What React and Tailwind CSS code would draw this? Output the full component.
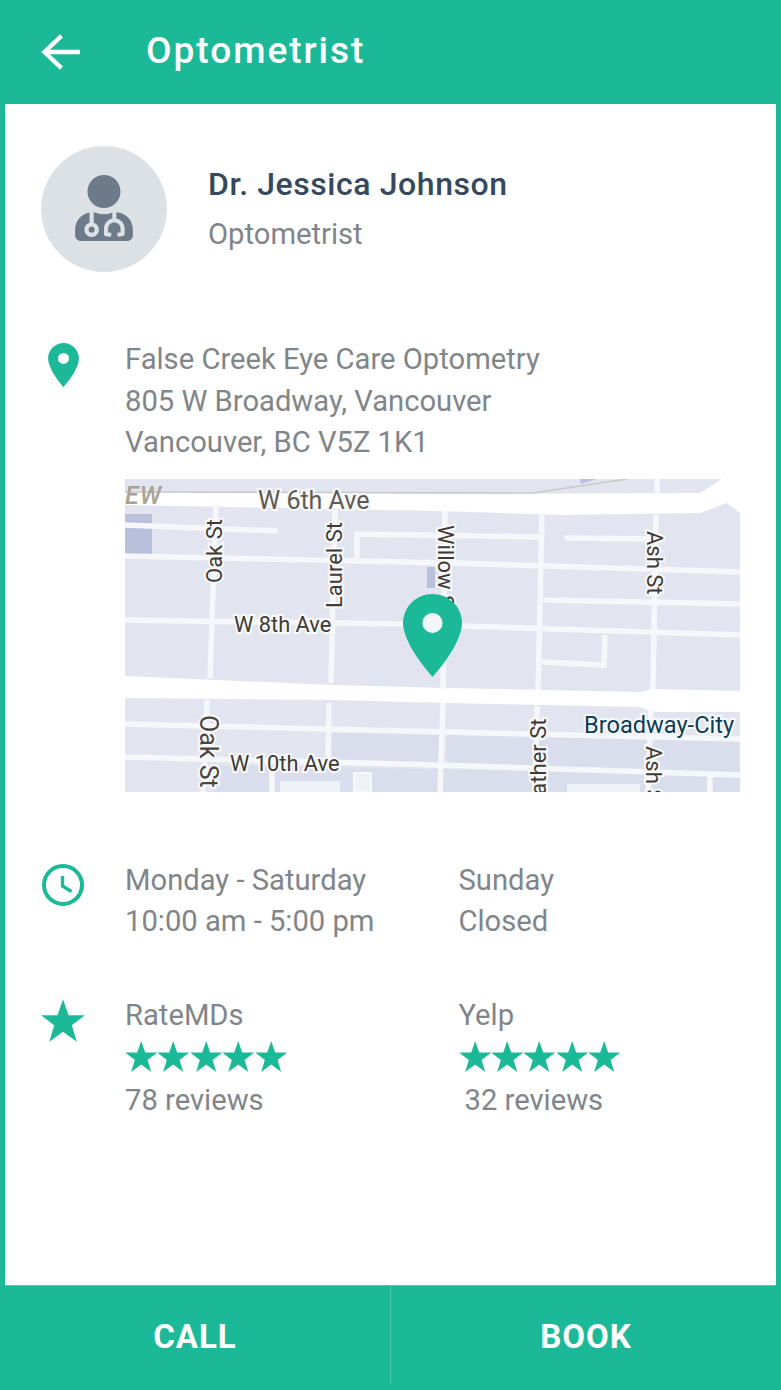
import React from 'react';
import { FaUserMd } from 'react-icons/fa';

const TEAL = '#1cb999';
const PIN = 'M12 2C8.13 2 5 5.13 5 9c0 5.25 7 13 7 13s7-7.75 7-13c0-3.87-3.13-7-7-7zm0 9.5a2.5 2.5 0 1 1 0-5 2.5 2.5 0 0 1 0 5z';

const Star = ({ className }) => (
    <svg viewBox="0 0 32 31" className={className} fill={TEAL}>
        <polygon points="16,0 20,11.6 32,11.6 22.4,19 26,31 16,23.6 6,31 9.6,19 0,11.6 12,11.6" />
    </svg>
);

const Stars = () => (
    <div className="flex h-[31px] mt-[5px]">
        {[0, 1, 2, 3, 4].map((i) => (
            <Star key={i} className="w-[32.4px] h-[31px] shrink-0" />
        ))}
    </div>
);

const roads = [
    '125,525 278,531',
    '125,556 450,563 740,572',
    '125,620 403,624 740,635',
    '125,724 447,732 740,739',
    '125,757 440,765 740,775',
    '543,600 740,604',
    '357,558 357,534 540,537',
    '605,635 604,665 542,662',
    '216,505 210,678',
    '207,700 203,792',
    '335,510 331,683',
    '329,703 328,765',
    '272,770 272,792',
    '445,511 443,690',
    '443,703 440,792',
    '542,513 538,690',
    '537,706 535,792',
    '657,479 657,493',
    '656,515 653,690',
    '651,710 648,792',
    '710,776 710,792',
];

const labels = [
    { text: 'W 6th Ave', x: 258, y: 509, size: 25, fill: '#5f5a52' },
    { text: 'W 8th Ave', x: 234, y: 632, size: 21.8, fill: '#3f3a33' },
    { text: 'W 10th Ave', x: 230, y: 771, size: 21.8, fill: '#3f3a33' },
    { text: 'Oak St', x: 222, y: 583, size: 22, fill: '#3f3a33', rotate: -90 },
    { text: 'Laurel St', x: 342, y: 608, size: 22, fill: '#3f3a33', rotate: -90 },
    { text: 'Oak St', x: 200, y: 715, size: 25, fill: '#4a453e', rotate: 90 },
    { text: 'Willow St', x: 438, y: 525, size: 22, fill: '#3f3a33', rotate: 90 },
    { text: 'Ash St', x: 647, y: 531, size: 22, fill: '#3f3a33', rotate: 90 },
    { text: 'Heather St', x: 546, y: 822, size: 22, fill: '#3f3a33', rotate: -90 },
    { text: 'Ash St', x: 646, y: 746, size: 22, fill: '#3f3a33', rotate: 90 },
    { text: 'Broadway-City', x: 584, y: 733, size: 23.6, fill: '#0b3d55' },
];

const MapPicture = () => (
    <svg viewBox="125 479 615 313" className="block w-[615px] h-[313px]" style={{ fontFamily: 'Roboto, sans-serif' }}>
        <rect x="125" y="479" width="615" height="313" fill="#e2e5ef" />
        <polygon points="447,735 740,741 740,775 447,767" fill="#dadeec" />
        <polygon points="332,733 440,735 440,765 332,760" fill="#dadeec" />
        <polygon points="215,765 740,775 740,792 215,792" fill="#dadeec" />
        <rect x="125" y="514" width="27" height="40" fill="#b8c0dc" />
        <rect x="427" y="567" width="8" height="21" fill="#b8c0dc" />
        <polygon points="580,479 596,479 581,484" fill="#b8c0dc" />
        <polygon points="125,492 440,494 700,493 722,479 740,479 740,513 727,503 700,513 560,515 440,511 125,505" fill="#ffffff" />
        <polygon points="125,676 333,685 447,688 640,692 653,689 740,691 740,712 653,712 640,707 447,703 333,700 125,698" fill="#ffffff" />
        <polyline points="125,492 533,493 627,479" fill="none" stroke="#c9c9c9" strokeWidth="1.5" />
        {roads.map((r) => (
            <polyline key={r} points={r} fill="none" stroke="#f6f7fb" strokeWidth="5.5" />
        ))}
        <line x1="567" y1="538" x2="655" y2="539" stroke="#f6f7fb" strokeWidth="5.5" strokeLinecap="round" />
        <rect x="280" y="781" width="60" height="11" fill="#eef1f5" />
        <rect x="354" y="773" width="17" height="19" fill="#eef1f5" stroke="#f8f9fb" strokeWidth="2" />
        <rect x="567" y="784" width="73" height="8" fill="#eef1f5" />
        <text x="125" y="504" fontSize="25" fontStyle="italic" letterSpacing="1" fill="#a9a295" fontWeight="500">EW</text>
        {labels.map((l) => (
            <text
                key={l.text + l.x}
                x={l.x}
                y={l.y}
                fontSize={l.size}
                fill={l.fill}
                stroke="#f8f9fb"
                strokeWidth="4"
                paintOrder="stroke"
                transform={l.rotate ? `rotate(${l.rotate} ${l.x} ${l.y})` : undefined}
            >
                {l.text}
            </text>
        ))}
        <svg x="403" y="594" width="59" height="83" viewBox="5 2 14 20" preserveAspectRatio="none">
            <path d="M12 2C8.13 2 5 5.13 5 9c0 5.25 7 13 7 13s7-7.75 7-13c0-3.87-3.13-7-7-7z" fill={TEAL} />
            <circle cx="12" cy="9" r="2.4" fill="#f4f5f9" />
        </svg>
    </svg>
);

const App = () => {
    return (
        <div className="h-[1390px] flex flex-col bg-[#1cb999]" style={{ fontFamily: 'Roboto, sans-serif' }}>
            <header className="h-[104px] shrink-0 flex items-center pl-[41px] text-white">
                <svg viewBox="0 0 40 38" className="w-[39px] h-[38px] shrink-0" fill="none" stroke="#ffffff" strokeWidth="4.5">
                    <path d="M40 19H4" />
                    <path d="M21 2.5 3.5 19 21 35.5" />
                </svg>
                <h1 className="ml-[66px] text-[37px] font-medium tracking-[2px] leading-none -mt-[3px]">Optometrist</h1>
            </header>

            <main className="flex-1 mx-[5px] bg-white px-[36px] pt-[42px] border-b border-[#4cc7ae]">
                <section className="flex items-start">
                    <div className="w-[126px] h-[126px] rounded-full bg-[#dce1e5] flex items-center justify-center text-[#6c7a89]">
                        <FaUserMd size={66} className="-mt-[2px]" />
                    </div>
                    <div className="ml-[41px] pt-[17px]">
                        <h2 className="text-[32px] font-medium tracking-[0.58px] text-[#34495e] leading-[42px]">Dr. Jessica Johnson</h2>
                        <p className="text-[29.2px] text-[#7f8589] leading-[42px] mt-[8px]">Optometrist</p>
                    </div>
                </section>

                <section className="flex mt-[67px]">
                    <div className="w-[84px] shrink-0 pt-[4px]">
                        <svg viewBox="5 2 14 20" className="w-[31px] h-[44px] ml-[7px]" fill={TEAL}>
                            <path d={PIN} />
                        </svg>
                    </div>
                    <div className="flex-1">
                        <div className="text-[29.2px] text-[#7f8589] leading-[41.5px]">
                            <p>False Creek Eye Care Optometry</p>
                            <p>805 W Broadway, Vancouver</p>
                            <p>Vancouver, BC V5Z 1K1</p>
                        </div>
                        <div className="mt-[15px]">
                            <MapPicture />
                        </div>
                    </div>
                </section>

                <section className="flex mt-[68px]">
                    <div className="w-[84px] shrink-0 pt-[4px]">
                        <svg viewBox="0 0 42 42" className="w-[42px] h-[42px] ml-[1px]" fill="none" stroke={TEAL} strokeWidth="4">
                            <circle cx="21" cy="21" r="19" />
                            <path d="M20.5 12V22L29.5 27.5" strokeWidth="3.4" />
                        </svg>
                    </div>
                    <div className="flex-1 grid grid-cols-[333.5px_1fr] text-[29.2px] text-[#7f8589] leading-[41px]">
                        <div>
                            <p>Monday - Saturday</p>
                            <p>10:00 am - 5:00 pm</p>
                        </div>
                        <div>
                            <p>Sunday</p>
                            <p>Closed</p>
                        </div>
                    </div>
                </section>

                <section className="flex mt-[53px]">
                    <div className="w-[84px] shrink-0 pt-[4px]">
                        <Star className="w-[44px] h-[43px]" />
                    </div>
                    <div className="flex-1 grid grid-cols-[333.5px_1fr] text-[29.2px] text-[#7f8589] leading-[41px]">
                        <div>
                            <p>RateMDs</p>
                            <Stars />
                            <p className="mt-[8px]">78 reviews</p>
                        </div>
                        <div>
                            <p>Yelp</p>
                            <Stars />
                            <p className="mt-[8px] pl-[6px]">32 reviews</p>
                        </div>
                    </div>
                </section>
            </main>

            <footer className="h-[104px] shrink-0 flex text-white text-[33px] font-bold tracking-[1px]">
                <button className="w-[391px] h-[98px] border-r border-[#4cc7ae] flex items-center justify-center pt-[4px]">CALL</button>
                <button className="flex-1 h-[98px] flex items-center justify-center pt-[4px]">BOOK</button>
            </footer>
        </div>
    );
};

export default App;
